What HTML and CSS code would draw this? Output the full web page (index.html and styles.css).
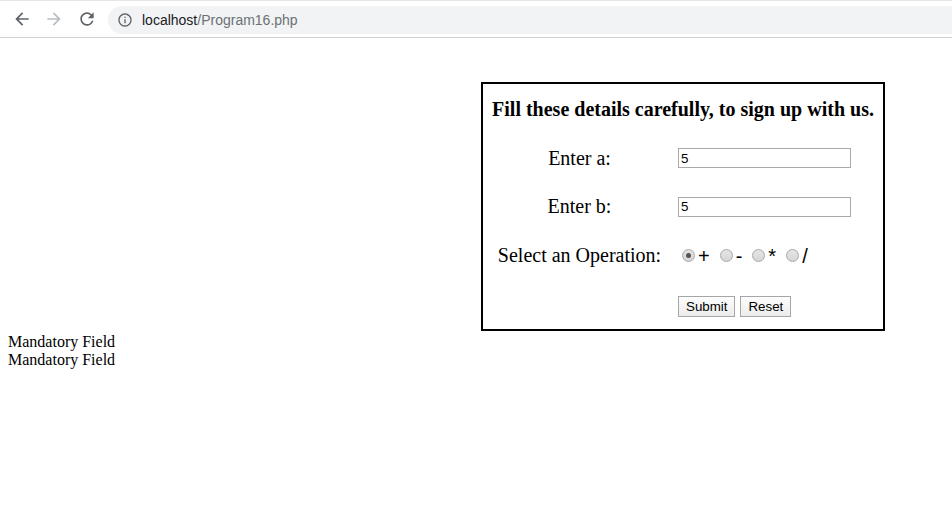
FILE: index.html
```html
<!DOCTYPE html>
<html>
<head>
<meta charset="utf-8">
<title>Program16</title>
<link rel="stylesheet" href="styles.css">
</head>
<body>
<div class="chrome">
  <span class="nav-btn back">
    <svg viewBox="0 0 24 24" width="20" height="20"><path d="M20 11H7.83l5.59-5.59L12 4l-8 8 8 8 1.41-1.41L7.83 13H20v-2z"/></svg>
  </span>
  <span class="nav-btn fwd">
    <svg viewBox="0 0 24 24" width="20" height="20"><path d="M12 4l-1.41 1.41L16.17 11H4v2h12.17l-5.58 5.59L12 20l8-8z"/></svg>
  </span>
  <span class="nav-btn reload">
    <svg viewBox="0 0 24 24" width="20" height="20"><path d="M17.65 6.35A7.958 7.958 0 0 0 12 4c-4.42 0-7.99 3.58-7.99 8s3.57 8 7.99 8c3.73 0 6.84-2.55 7.730-6h-2.08A5.990 5.990 0 0 1 12 18c-3.31 0-6-2.69-6-6s2.69-6 6-6c1.66 0 3.140.69 4.22 1.78L13 11h7V4l-2.35 2.35z"/></svg>
  </span>
  <div class="omnibox">
    <svg class="info" viewBox="0 0 24 24" width="16" height="16"><path d="M11 7h2v2h-2zm0 4h2v6h-2zm1-9C6.48 2 2 6.48 2 12s4.48 10 10 10 10-4.48 10-10S17.52 2 12 2zm0 18c-4.41 0-8-3.590-8-8s3.59-8 8-8 8 3.59 8 8-3.59 8-8 8z"/></svg>
    <span class="url"><span class="host">localhost</span><span class="path">/Program16.php</span></span>
  </div>
</div>
<div class="page">
  <form class="box">
    <div class="title">Fill these details carefully, to sign up with us.</div>
    <div class="label">Enter a:</div>
    <div class="field"><input class="txt" type="text" value="5"></div>
    <div class="label">Enter b:</div>
    <div class="field"><input class="txt" type="text" value="5"></div>
    <div class="label">Select an Operation:</div>
    <div class="field ops">
      <span class="opt"><span class="radio checked"></span><span class="sym">+</span></span>
      <span class="opt"><span class="radio"></span><span class="sym">-</span></span>
      <span class="opt"><span class="radio"></span><span class="sym">*</span></span>
      <span class="opt"><span class="radio"></span><span class="sym">/</span></span>
    </div>
    <div class="label"></div>
    <div class="field btns"><button type="button" class="btn">Submit</button><button type="button" class="btn">Reset</button></div>
  </form>
  <div class="msgs">
    <div class="msg">Mandatory Field</div>
    <div class="msg">Mandatory Field</div>
  </div>
</div>
</body>
</html>
```
FILE: styles.css
```css
html, body {
  margin: 0;
  padding: 0;
  background: #fff;
}
body {
  font-family: "Liberation Serif", "Times New Roman", serif;
  font-size: 16px;
  color: #000;
}
.chrome {
  height: 36px;
  border-top: 1px solid #e3e5e8;
  border-bottom: 1px solid #d0d0d0;
  display: flex;
  align-items: center;
  background: #fff;
}
.nav-btn {
  display: flex;
  width: 20px;
  height: 20px;
}
.nav-btn svg { fill: #5f6368; }
.back { margin-left: 12px; }
.fwd { margin-left: 12px; }
.fwd svg { fill: #b9bdc2; }
.reload { margin-left: 13px; }
.omnibox {
  margin-left: 11px;
  flex: 1;
  height: 28px;
  margin-top: 1px;
  background: #f1f3f4;
  border-radius: 14px 0 0 14px;
  display: flex;
  align-items: center;
  font-family: "Liberation Sans", Arial, sans-serif;
  font-size: 14px;
}
.info {
  margin-left: 9px;
  fill: #5f6368;
}
.url { margin-left: 9px; }
.host { color: #202124; }
.path { color: #6d7175; }

.page {
  padding: 44px 8px 0;
}
.box {
  margin: 0 0 0 473px;
  width: 400px;
  border: 2px solid #000;
  display: grid;
  grid-template-columns: 193px 205px;
  column-gap: 2px;
  grid-template-rows: 50px 48px 49px 49px 49px;
  align-items: center;
}
.title {
  grid-column: 1 / 3;
  text-align: center;
  font-weight: bold;
  font-size: 20px;
}
.label {
  text-align: center;
  font-size: 20px;
}
.field {
  display: flex;
  align-items: center;
}
.txt {
  box-sizing: border-box;
  width: 173px;
  height: 20px;
  margin: 0;
  padding: 1px 2px;
  border: 1px solid #a9a9a9;
  font-family: "Liberation Sans", Arial, sans-serif;
  font-size: 13.33px;
  color: #000;
  background: #fff;
}
.ops {
  font-family: "Liberation Sans", Arial, sans-serif;
  font-size: 20px;
}
.opt {
  display: inline-flex;
  align-items: center;
}
.radio {
  box-sizing: border-box;
  width: 13px;
  height: 13px;
  border-radius: 50%;
  border: 1px solid #a8a8a8;
  background: linear-gradient(#e4e4e4, #d6d6d6);
  margin: 0 3px 0 4px;
  display: inline-flex;
  align-items: center;
  justify-content: center;
}
.opt + .opt .radio { margin-left: 10px; }
.radio.checked::after {
  content: "";
  width: 5px;
  height: 5px;
  border-radius: 50%;
  background: #555;
}
.sym { line-height: 20px; }
.btns { padding-top: 4px; }
.btn {
  box-sizing: border-box;
  height: 21px;
  margin: 0 5px 0 0;
  padding: 1px 7px;
  border: 1px solid #a6a6a6;
  background: linear-gradient(#fdfdfd, #ececec);
  font-family: "Liberation Sans", Arial, sans-serif;
  font-size: 13.33px;
  color: #000;
  border-radius: 0;
}
.msgs {
  padding-top: 2px;
}
.msg {
  line-height: 18px;
}
```
